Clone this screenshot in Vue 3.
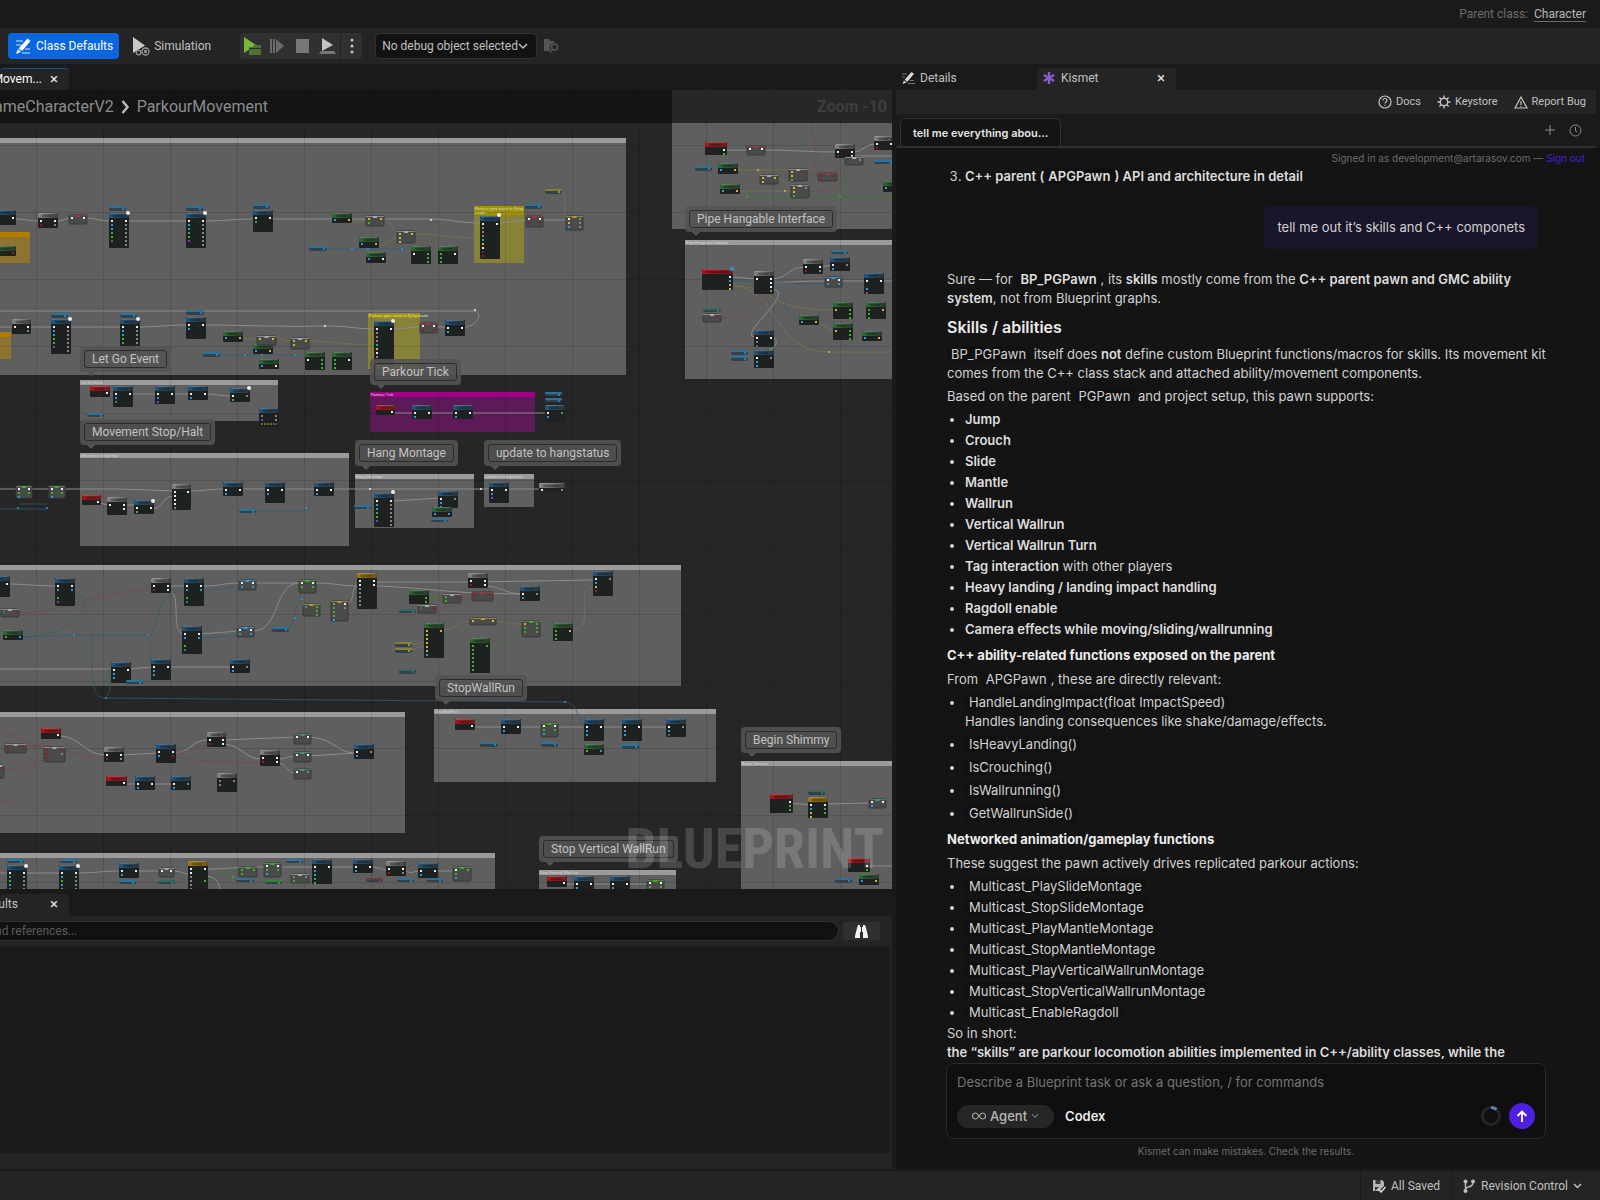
<script setup>
const LETTER = { w: '#ececec', b: '#2a9ad6', g: '#3fae2a', m: '#8f3aac', y: '#d8b23a', r: '#8e1c22', o: '#858585', t: '#2f7f74' }
const HEADS = { b: 'hBlue', g: 'hGreen', r: 'hRed', k: 'hGray', y: 'hGold' }
const VARS = { v: '#2b7fae', vg: '#3f8f3a', vy: '#a08d34', vr: '#8a3038', vt: '#33736c' }
const CHIPS = { c: '#a8a8a8', cr: '#9a3a44', cg: '#4fa33a', cb: '#3a98cc', cy: '#b09a45', ct: '#4f8f86' }

const parse = (text) => text.trim().split('\n').map((line) => line.trim().split(/\s+/))

/* kind x y width height [left pins] [right pins] */
const source = `
b -4 210 20 15 - w
k 38 213 20 15 wr wo
cr 69 215 18 9 w w
v 109 206 17 5
b 109 213 20 35 wbbggm wooooooo
v 186 206 17 5
b 186 213 20 35 wbbggm wooooooo
v 253 204 17 5
b 253 210 20 22 wb w
v 309 246 18 5
g -4 246 20 10 - r
k 12 319 19 15 w wo
v 51 313 17 5
b 51 319 20 35 wbbggm wooooooo
v 120 313 17 5
b 120 319 20 35 wbbggm wooooooo
v 186 310 18 5
b 186 317 20 22 wb w
g 223 331 20 11 b y
v 203 352 17 5
c 257 336 19 9 y y
g 253 344 20 10 b y
g 259 359 20 10 b w
c 291 338 18 11 yy y
g 305 352 20 18 w ggg
g 332 352 20 18 ggg w
g 332 213 20 10 b y
c 366 216 18 10 yg y
g 359 237 20 11 b y
g 366 252 20 11 b w
c 397 231 18 12 yyy y
g 411 246 20 18 w ggg
g 438 246 20 18 ggg w
b 480 216 20 43 wooobywrrg w
cr 526 216 17 11 wr wr
v 525 204 17 5
vy 545 189 17 5
cy 566 216 17 14 wyb ooo
b 374 321 20 44 wooobyworg w
cr 420 323 17 10 wr wr
b 445 320 20 16 wbm w
r 90 386 20 11 - w
b 113 386 20 21 wbt w
b 155 386 20 18 wbm w
b 188 386 20 14 wb w
b 230 388 20 14 wg o
b 259 408 20 19 om oo
v 87 413 17 4
r 376 405 19 10 - w
b 412 405 20 14 wb w
b 453 405 20 14 wb w
v 545 392 17 4
v 545 398 17 4
b 545 405 20 17 wb o
cg 16 486 16 12 wgb wg
cg 49 486 16 12 wgb wg
r 82 495 19 10 - w
k 107 497 20 18 w ww
b 134 500 20 14 wg w
k 172 484 19 26 wwwwo w
b 223 482 20 14 wb w
b 265 482 20 21 wb w
b 314 482 20 14 wb w
v 239 509 17 4
b 374 493 20 34 wbbggm wooooooo
b 438 491 20 17 wbb o
g 432 507 20 10 b b
v 431 518 17 4
v 354 505 17 4
b 489 482 20 21 wbm w
k 539 483 26 9 w o
b -4 576 14 21 - w
b 55 578 20 28 wb-gmb wb
c 1 609 18 8 t r
g 3 630 20 10 g b
k 151 578 20 15 wr ww
b 184 578 20 28 wb-gtb wb
cb 239 580 17 10 wb wb
cg 299 580 17 13 wg-b wg
y 357 573 20 36 wwooooo ww
cy 303 604 17 12 b ggg
cy 331 601 17 20 oggob wo
b 182 626 20 28 wb-gtb wb
cb 237 627 17 10 wb wb
v 272 627 17 5
b 111 662 20 21 wbb w
v 126 680 17 4
b 151 659 20 21 wbb w
b 230 659 20 14 wb o
k 468 573 20 15 wr ww
b 520 586 20 15 wb o
b 593 571 20 25 wbyr o
g 409 590 20 14 - gg
c 443 594 18 9 gg r
cr 472 592 21 9 rr r
vt 399 609 17 4
c 418 605 18 8 t r
g 424 623 20 35 yyyyyyb y
cy 470 618 26 7 yy y
cg 522 621 18 16 ygg ggg
g 553 623 20 18 ggg y
g 470 638 20 35 gggggggb g
vy 395 642 17 5
vy 395 648 17 5
vt 399 669 17 5
r 41 728 20 11 - w
c 5 744 21 9 rr r
c 44 747 21 15 rrr ro
c -4 765 8 13 - r
k 104 747 20 15 wr wo
b 156 744 20 19 wb wr
r 106 776 21 10 - w
b 135 776 20 14 wb w
b 171 776 20 14 wb o
k 217 773 20 19 oo o
k 207 732 19 15 wr ww
k 260 750 20 16 wr ww
ct 294 734 17 10 w w
ct 294 752 17 10 w w
ct 294 769 17 10 w o
b 354 744 20 15 wb o
r 455 719 20 11 - w
b 501 719 20 15 wb w
cg 541 723 17 14 wgb wg
b 584 719 20 22 wbb w
b 622 719 20 22 wbb w
b 666 719 20 18 wbm o
v 480 742 18 5
v 541 742 17 5
g 584 744 20 11 g b
v 622 744 17 5
v 7 859 17 4
b 7 865 20 30 wbgbgm wooooo
v 60 859 17 4
b 59 865 20 30 wbgbgm wooooo
b 119 863 20 15 wb w
v 119 880 17 4
c 159 868 15 9 w w
vt 158 880 17 4
y 188 861 20 32 wwooooo w--g
cg 239 867 18 10 gg g
v 236 878 18 4
cg 264 863 17 14 wgb wg
vg 265 880 17 4
v 286 859 17 4
c 291 874 18 9 gg o
b 312 859 20 25 wbbggb w
b 353 859 20 14 wb w
k 386 861 20 15 wr wo
vr 366 878 17 4
v 397 878 17 4
b 418 863 20 15 wb w
v 426 878 17 4
cg 453 867 18 14 wgb o
r 547 876 20 11 - w
b 574 876 20 16 wb w
b 610 876 20 16 wb w
cg 647 880 17 12 wg wg
r 770 794 23 19 - wgg
vt 808 790 17 5
y 808 797 20 21 wbyy wgg
ct 869 799 17 9 wb w
r 848 858 22 14 - wg
v 835 878 17 5
g 859 874 20 11 b y
r 705 142 22 13 - wg
cr 747 146 18 9 w w
k 835 144 20 14 wr ww
k 874 136 20 14 wr w
c 845 157 18 8 r o
v 874 160 20 4
v 695 166 17 5
g 718 163 20 11 b y
g 720 184 20 10 b y
c 760 175 18 9 yy y
c 789 169 18 12 yyg r
c 791 185 18 13 yyg o
cr 818 173 19 8 rr r
g 883 181 20 11 b y
r 702 269 31 21 - wbyy
k 754 271 20 23 w wwwo
k 803 259 20 15 wr wo
v 831 250 17 4
b 830 257 20 14 wb o
cb 825 277 17 10 wb wb
b 864 273 20 21 w-bm w
vt 703 308 18 4
c 703 314 18 8 - r
g 833 302 20 17 y ggg
g 866 302 20 17 ggg y
g 799 315 20 10 b y
g 833 323 20 17 y ggg
g 862 331 20 10 b y
b 754 330 20 17 wbm w
b 754 350 20 18 wbb o
v 731 350 17 5
v 731 356 17 5`

const pinsOf = (letters, px, py, step) =>
  !letters || letters === '-'
    ? []
    : [...letters].map((c, i) => ({ x: px, y: py + i * step, fill: LETTER[c] })).filter((p) => p.fill)

const items = parse(source).map(([kind, ...rest]) => {
  const [x, y, w, h] = rest.slice(0, 4).map(Number)
  const top = kind in HEADS ? (h < 12 ? 7 : 8) : 3
  const pins = [...pinsOf(rest[4], x + 2, y + top - 1, 4), ...pinsOf(rest[5], x + w - 4, y + top - 1, 4)].filter(
    (p) => p.y < y + h - 1,
  )
  return { kind, x, y, w, h, pins }
})
const nodes = items.filter((n) => n.kind in HEADS)
const chips = items.filter((n) => n.kind in CHIPS)
const vars = items.filter((n) => n.kind in VARS)

const comments = [
  { x: -10, y: 138, w: 636, h: 237, tone: 'gray' },
  { x: -10, y: 232, w: 40, h: 31, tone: 'amber' },
  { x: -10, y: 332, w: 21, h: 27, tone: 'amber' },
  { x: 474, y: 206, w: 50, h: 57, tone: 'yellow', bar: 9, title: 'Parkour gets stuck in flying', more: 'mode' },
  { x: 368, y: 313, w: 52, h: 56, tone: 'yellow', title: 'Parkour gets stuck in flying mode' },
  { x: 80, y: 380, w: 198, h: 41, tone: 'gray', title: 'Let Go Event' },
  { x: 80, y: 453, w: 269, h: 93, tone: 'gray', title: 'Movement Stop/Halt' },
  { x: 370, y: 392, w: 165, h: 40, tone: 'magenta', title: 'Parkour Tick' },
  { x: 355, y: 474, w: 119, h: 54, tone: 'gray', title: 'Hang Montage' },
  { x: 484, y: 474, w: 50, h: 33, tone: 'gray', title: 'update to hangstatus' },
  { x: -10, y: 565, w: 691, h: 121, tone: 'gray' },
  { x: -10, y: 712, w: 415, h: 121, tone: 'gray' },
  { x: 434, y: 709, w: 282, h: 73, tone: 'gray', title: 'StopWallRun' },
  { x: -10, y: 853, w: 505, h: 60, tone: 'gray' },
  { x: 539, y: 870, w: 137, h: 40, tone: 'gray', title: 'Stop Vertical WallRun' },
  { x: 741, y: 761, w: 200, h: 160, tone: 'gray', title: 'Begin Shimmy' },
  { x: 672, y: 60, w: 260, h: 169, tone: 'gray' },
  { x: 685, y: 240, w: 240, h: 139, tone: 'gray', title: 'Pipe Hangable Interface' },
]
const TONES = {
  gray: ['#5f5f5f', '#9b9b9b'],
  amber: ['#8d7431', '#b37b00'],
  yellow: ['#87823a', '#a19300'],
  magenta: ['#5c1a58', '#a00086'],
}

const bubbles = [
  { x: 80, y: 346, text: 'Let Go Event' },
  { x: 80, y: 419, text: 'Movement Stop/Halt' },
  { x: 370, y: 359, text: 'Parkour Tick' },
  { x: 355, y: 440, text: 'Hang Montage' },
  { x: 484, y: 440, text: 'update to hangstatus' },
  { x: 435, y: 675, text: 'StopWallRun' },
  { x: 741, y: 727, text: 'Begin Shimmy' },
  { x: 539, y: 836, text: 'Stop Vertical WallRun' },
  { x: 685, y: 206, text: 'Pipe Hangable Interface' },
]

const wires = [
  ['w', 'M14 219C26 219 28 221 40 221M56 221C64 221 66 218 72 218M85 218C96 218 98 221 111 221M127 221H188M204 221C226 221 234 219 256 219M270 219H431C450 219 456 223 482 223M497 223C512 223 514 220 528 220M541 220H568'],
  ['w', 'M0 311H474C484 312 478 326 462 328M0 327H14M29 327H53M69 327H122M137 327C156 327 166 325 188 325M203 325C250 325 270 327 325 326C350 326 356 329 376 329M391 329C404 329 408 327 422 327M435 327H447'],
  ['w', 'M131 394H157M173 394H190M206 394C218 394 220 396 232 396M393 413H414M429 413H455M471 413H547'],
  ['w', 'M0 489H120L175 491M189 491C204 491 208 489 225 489M241 489H267M283 489H316M331 489H541M99 503L109 505M125 505H136M152 509C164 508 162 496 174 496M394 501L440 498'],
  ['w', 'M7 584C26 584 36 586 57 586M169 586H186M202 586C222 586 222 583 240 583M255 583H300M314 583C336 583 340 586 358 586M375 582H470L595 580M375 586C420 587 450 594 522 594M486 586C500 586 506 594 522 594'],
  ['w', 'M169 591C182 592 170 634 184 634M200 634L239 631M252 631C282 631 272 583 300 583M347 604C356 602 350 586 358 586M0 669H113M129 669L153 667M169 667H232'],
  ['w', 'M60 736C80 736 84 755 106 755M122 755L158 753M174 753C192 753 190 740 208 740M224 740L296 737M224 744C244 746 244 759 262 759M278 759C286 759 288 756 296 756M278 763C288 764 286 773 296 773M309 737C336 739 336 753 356 753M309 756L356 753M125 784H137M153 784H173'],
  ['w', 'M473 727H503M519 727H543M556 727H586M602 727H624M640 727H668M0 873H9M26 873H61M77 873C96 873 100 871 121 871M137 871H160M172 871C182 871 182 874 190 874M206 869C230 869 232 867 266 867M279 867H314M329 867H355M371 867C380 867 380 870 388 870M404 870C412 875 412 871 420 871M435 871H455M206 876C218 877 219 884 221 892M565 884H576M592 884H612M627 884H649'],
  ['w', 'M725 150H749M763 150C790 150 810 152 837 152M853 152C864 152 864 144 876 144M853 156H892M731 277L756 279M771 279C788 279 788 267 805 267M821 267L832 265M771 283C790 283 790 281 827 281H892M771 289C800 290 734 337 756 337M791 803L810 805M826 804L871 803M868 866H892M756 357C746 362 790 345 772 337'],
  ['b', 'M20 504H47M0 509H47M256 511H306C312 508 308 500 316 497M74 594C100 594 80 637 20 637M22 637L74 635H148C160 635 152 590 186 590M92 635V660C92 690 95 698 106 698L565 702C582 704 576 727 586 727M202 590C220 590 226 587 240 587M200 638L239 635M288 630C296 624 294 600 303 600M220 355H300M327 249H405M731 281C760 281 750 283 827 284M771 285C790 285 780 319 800 319M148 635C154 650 146 663 153 667M109 669C112 690 108 696 106 698'],
  ['y', 'M350 221H366M384 219C392 222 392 231 398 234M414 234C440 234 450 238 482 238M377 246C390 246 388 238 398 238M241 339H258M275 338C284 338 284 341 292 341M308 341C330 341 350 345 376 345M560 191C570 192 560 222 568 223M440 630C456 630 456 621 471 621M495 621L524 625M571 631C600 628 570 588 595 587M410 645L425 642M410 650L425 646M736 170H789M758 170L762 178M776 178C784 178 784 186 792 186M738 191H792M731 286C780 286 760 310 834 310M731 286C780 286 770 352 829 352H892M818 323L834 331'],
  ['r', 'M17 613C60 614 90 591 153 590M25 747C60 740 60 756 106 758M0 730L46 750M4 770C30 770 30 758 46 758M0 802C34 804 20 760 46 760M174 757C200 762 230 762 262 763M721 318C750 318 768 300 772 290M805 175H820M807 192C850 190 850 170 838 160M805 175C826 170 810 130 812 123M435 609C460 606 452 600 473 598M460 598L473 595M174 753C186 753 190 748 208 745'],
  ['g', 'M747 197H892M845 160V197M319 606H332M206 882C230 870 230 869 240 870M489 647C506 647 510 634 523 632M428 597H444'],
]
const STROKES = { w: '#8c8c8c', b: '#2f5d73', y: '#7d7648', r: '#744a4c', g: '#3c7a30' }

const dots = parse(`
w 128 213
w 205 213
w 70 319
w 138 319
w 499 215
w 393 321
w 249 388
w 153 501
w 393 492
w 26 866
w 78 866
b 732 269`)
const reroutes = [
  ['w', 431, 220], ['w', 325, 326], ['w', 475, 310], ['w', 370, 489], ['w', 481, 489],
  ['b', 352, 249], ['b', 368, 249], ['b', 402, 249], ['b', 245, 355], ['b', 262, 355], ['b', 295, 355],
  ['b', 18, 508], ['b', 47, 508], ['b', 306, 508], ['b', 74, 635], ['b', 148, 635], ['b', 106, 698],
  ['b', 565, 702], ['b', 302, 599], ['b', 295, 618], ['y', 758, 170], ['y', 785, 191], ['y', 829, 352],
  ['g', 747, 197], ['g', 840, 197], ['g', 233, 877],
]

const skills = [
  ['Jump'], ['Crouch'], ['Slide'], ['Mantle'], ['Wallrun'], ['Vertical Wallrun'], ['Vertical Wallrun Turn'],
  ['Tag interaction', ' with other players'], ['Heavy landing / landing impact handling'],
  ['Ragdoll enable'], ['Camera effects while moving/sliding/wallrunning'],
]
const calls = ['IsHeavyLanding()', 'IsCrouching()', 'IsWallrunning()', 'GetWallrunSide()']
const multicasts = [
  'Multicast_PlaySlideMontage', 'Multicast_StopSlideMontage', 'Multicast_PlayMantleMontage',
  'Multicast_StopMantleMontage', 'Multicast_PlayVerticalWallrunMontage',
  'Multicast_StopVerticalWallrunMontage', 'Multicast_EnableRagdoll',
]
</script>

<template>
  <div class="editor">
    <header class="titlebar">
      <span>Parent class:</span>
      <a href="#">Character</a>
    </header>

    <div class="toolbar">
      <button class="tool primary">
        <svg width="18" height="18" viewBox="0 0 18 18">
          <path d="M2 4h7M2 8h5M8 16h8M11 12h5" stroke="#8fbdf5" stroke-width="1.3" />
          <path d="M13.500 1.500l3 2.500-8.500 10-3.500-2.500zM3.800 12.200l3.300 2.500L2 17z" fill="#fff" />
        </svg>
        Class Defaults
      </button>
      <button class="tool">
        <svg width="18" height="20" viewBox="0 0 18 20">
          <path d="M1 1l12 8.500L1 17z" fill="#c8c8c8" />
          <g fill="#242424" stroke="#9a9a9a" stroke-width="1.300">
            <circle cx="13.500" cy="15.500" r="3.500" />
            <circle cx="13.500" cy="15.500" r="1" />
            <circle cx="6.500" cy="16.500" r="2.300" />
          </g>
        </svg>
        Simulation
      </button>
      <div class="play">
        <button aria-label="Play">
          <svg width="19" height="18" viewBox="0 0 19 18">
            <path d="M1 0l12 8-12 8z" fill="#76b83a" />
            <path d="M6 10h4l1-2h7v10H6z" fill="#4e7231" />
            <path d="M6 11.500h12" stroke="#2f2f2f" />
          </svg>
        </button>
        <button aria-label="Step">
          <svg width="15" height="16" viewBox="0 0 15 16"><path d="M1 1v14M4 1v14" stroke="#6a6a6a" stroke-width="2" /><path d="M6 1l8 7-8 7z" fill="#6a6a6a" /></svg>
        </button>
        <button aria-label="Stop"><svg width="13" height="14"><rect width="13" height="14" fill="#767676" /></svg></button>
        <button aria-label="Eject">
          <svg width="17" height="17" viewBox="0 0 17 17"><path d="M3 0l11 7-11 6z" fill="#c4c4c4" /><path d="M2 13h13l2 3H0z" fill="#777" /></svg>
        </button>
        <button class="more" aria-label="Play options">
          <svg width="4" height="16"><g fill="#c4c4c4"><circle cx="2" cy="2" r="1.500" /><circle cx="2" cy="8" r="1.500" /><circle cx="2" cy="14" r="1.500" /></g></svg>
        </button>
      </div>
      <button class="debug">
        No debug object selected
        <svg width="10" height="7" viewBox="0 0 10 7"><path d="M1 1l4 4 4-4" fill="none" stroke="#c0c0c0" stroke-width="1.500" /></svg>
      </button>
      <svg width="16" height="16" viewBox="0 0 16 16">
        <path d="M1 1h5l1 2h4v2a4.500 4.500 0 0 0-4 6v2H1z" fill="#565656" />
        <circle cx="11.500" cy="9" r="3" fill="none" stroke="#565656" stroke-width="1.500" />
        <path d="M9.500 11L7 14.500" stroke="#565656" stroke-width="1.500" />
      </svg>
    </div>

    <main class="body">
      <section class="left">
        <div class="tabs">
          <div class="tab cut active"><span>Movem...</span><button aria-label="Close tab">×</button></div>
        </div>

        <div class="graph">
          <svg class="canvas" width="100%" height="100%">
            <defs>
              <linearGradient id="hBlue"><stop offset="0" stop-color="#25567c" /><stop offset="1" stop-color="#24333c" /></linearGradient>
              <linearGradient id="hGreen"><stop offset="0" stop-color="#2f6a35" /><stop offset="1" stop-color="#28392a" /></linearGradient>
              <linearGradient id="hRed"><stop offset="0" stop-color="#a5161c" /><stop offset="1" stop-color="#6a1c20" /></linearGradient>
              <linearGradient id="hGray"><stop offset="0" stop-color="#858585" /><stop offset="1" stop-color="#3c3c3c" /></linearGradient>
              <linearGradient id="hGold"><stop offset="0" stop-color="#9a7a10" /><stop offset="1" stop-color="#6b5517" /></linearGradient>
              <pattern id="grid" width="67" height="67" patternUnits="userSpaceOnUse" x="36" y="11">
                <path d="M0.500 0V67M0 0.500H67" stroke="#000" stroke-opacity=".12" />
              </pattern>
            </defs>
            <g transform="translate(0 -90)">
              <g v-for="(c, i) in comments" :key="i">
                <rect :x="c.x" :y="c.y" :width="c.w" :height="c.h" :fill="TONES[c.tone][0]" />
                <rect :x="c.x" :y="c.y" :width="c.w" :height="c.bar || 5" :fill="TONES[c.tone][1]" />
                <text v-if="c.title" :x="c.x + 1" :y="c.y + 4" class="note">{{ c.title }}</text>
                <text v-if="c.more" :x="c.x + 1" :y="c.y + 8" class="note">{{ c.more }}</text>
              </g>
              <rect x="0" y="90" width="100%" height="100%" fill="url(#grid)" />
              <path v-for="(w, i) in wires" :key="i" :d="w[1]" fill="none" :stroke="STROKES[w[0]]" :stroke-opacity="w[0] === 'w' ? 1 : 0.75" />
              <g v-for="(n, i) in nodes" :key="i">
                <rect :x="n.x" :y="n.y" :width="n.w" :height="n.h" rx="1" fill="#1d2120" />
                <rect :x="n.x" :y="n.y" :width="n.w" height="5" rx="1" :fill="`url(#${HEADS[n.kind]})`" />
                <rect :x="n.x + 1" :y="n.y" :width="n.w - 2" height="1" fill="#fff" fill-opacity=".2" />
                <rect :x="n.x + 4" :y="n.y + 2" :width="n.w - 10" height="2" fill="#000" fill-opacity=".25" />
                <rect v-for="(p, j) in n.pins" :key="j" :x="p.x" :y="p.y" width="2" height="2" :fill="p.fill" />
              </g>
              <g v-for="(n, i) in chips" :key="i">
                <rect :x="n.x" :y="n.y" :width="n.w" :height="n.h" rx="1" fill="#484b48" stroke="#383838" />
                <rect :x="n.x" :y="n.y" :width="n.w" height="1" :fill="CHIPS[n.kind]" fill-opacity=".7" />
                <rect :x="n.x + n.w / 2 - 2" :y="n.y" width="4" height="2" :fill="CHIPS[n.kind]" />
                <rect v-for="(p, j) in n.pins" :key="j" :x="p.x" :y="p.y" width="2" height="2" :fill="p.fill" />
              </g>
              <g v-for="(n, i) in vars" :key="i">
                <rect :x="n.x" :y="n.y" :width="n.w" :height="n.h" rx="2" fill="#31424a" />
                <rect :x="n.x" :y="n.y" :width="n.w" height="2" rx="1" :fill="VARS[n.kind]" fill-opacity=".8" />
                <rect :x="n.x + n.w - 4" :y="n.y + 2" width="2" height="2" :fill="VARS[n.kind]" />
              </g>
              <circle v-for="(d, i) in dots" :key="i" :cx="d[1]" :cy="d[2]" r="2" :fill="LETTER[d[0]]" />
              <circle v-for="(d, i) in reroutes" :key="i" :cx="d[1]" :cy="d[2]" r="1" :fill="LETTER[d[0]]" />
              <path d="M261 424H277" stroke="#b9b52c" stroke-dasharray="2 1" />
            </g>
          </svg>

          <div v-for="b in bubbles" :key="b.text" class="bubble" :style="{ left: b.x + 'px', top: b.y - 90 + 'px' }">
            <span>{{ b.text }}</span>
          </div>

          <nav class="crumbs">
            <a href="#">ameCharacterV2</a>
            <svg width="9" height="14" viewBox="0 0 9 14"><path d="M1.500 1l5 6-5 6" fill="none" stroke="#bdbdbd" stroke-width="2.400" /></svg>
            <a href="#">ParkourMovement</a>
            <strong>Zoom -10</strong>
          </nav>
          <div class="watermark">BLUEPRINT</div>
        </div>

        <div class="tabs lower">
          <div class="tab cut"><span>ults</span><button aria-label="Close results">×</button></div>
        </div>
        <div class="find">
          <div class="find-row">
            <input type="text" aria-label="Find references" placeholder="nd references..." />
            <button aria-label="Find in Blueprints">
              <svg width="13" height="13" viewBox="0 0 13 13"><path d="M3 0h2v2h3V0h2l1 3 2 8v2H8V7H5v6H0v-2l2-8z" fill="#f2f2f2" /><path d="M6.500 2v5" stroke="#2f2f2f" /></svg>
            </button>
          </div>
          <div class="results"></div>
        </div>
      </section>

      <section class="right">
        <div class="tabs">
          <div class="tab details">
            <svg width="14" height="14" viewBox="0 0 14 14">
              <path d="M1 3h5M1 6h3M7 12.500h7M9 9.500h4" stroke="#777" />
              <path d="M10.500 1l2.500 1.800-6.500 8-2.800-2zM3 9.500l2.700 2L1.500 13z" fill="#dcdcdc" />
            </svg>
            <span>Details</span>
          </div>
          <div class="tab kismet">
            <svg width="14" height="14" viewBox="0 0 14 14"><path d="M7 1v12M1.800 4l10.400 6M1.800 10l10.400-6" stroke="#8a5ccc" stroke-width="2.400" /></svg>
            <span>Kismet</span>
            <button aria-label="Close Kismet">×</button>
          </div>
        </div>

        <div class="links">
          <a href="#">
            <svg width="14" height="14" viewBox="0 0 14 14" fill="none" stroke="#c4c4c4" stroke-width="1.200"><circle cx="7" cy="7" r="6" /><path d="M5 5.500c0-2.700 4-2.700 4 0 0 1.500-2 1.500-2 3M7 9.800v1" /></svg>
            Docs
          </a>
          <a href="#">
            <svg width="14" height="14" viewBox="0 0 14 14" fill="none" stroke="#c4c4c4"><circle cx="7" cy="7" r="3.700" stroke-width="1.400" /><path d="M7 .5v3M7 10.500v3M.5 7h3M10.500 7h3M2.400 2.400l2 2M9.600 9.600l2 2M2.400 11.600l2-2M9.600 4.400l2-2" stroke-width="1.400" /></svg>
            Keystore
          </a>
          <a href="#">
            <svg width="14" height="13" viewBox="0 0 14 13" fill="none" stroke="#c4c4c4" stroke-width="1.200"><path d="M7 1l6 11H1zM7 5v4M7 10v1" /></svg>
            Report Bug
          </a>
        </div>

        <div class="chats">
          <button class="chat-tab">tell me everything abou...</button>
          <button class="icon" aria-label="New chat"><svg width="10" height="10"><path d="M5 0v10M0 5h10" stroke="#8c8c8c" /></svg></button>
          <button class="icon" aria-label="History"><svg width="13" height="13" fill="none" stroke="#8c8c8c"><circle cx="6.500" cy="6.500" r="5.500" /><path d="M6.500 3v4l2 1" /></svg></button>
        </div>

        <p class="account">Signed in as development@artarasov.com — <a href="#">Sign out</a></p>

        <article class="talk">
          <ol start="3"><li><b>C++ parent (<code>APGPawn</code>) API and architecture in detail</b></li></ol>
          <div class="said">tell me out it’s skills and C++ componets</div>
          <p>Sure — for <code class="strong">BP_PGPawn</code>, its <b>skills</b> mostly come from the <b>C++ parent pawn and GMC ability system</b>, not from Blueprint graphs.</p>
          <h2>Skills / abilities</h2>
          <p><code>BP_PGPawn</code> itself does <b>not</b> define custom Blueprint functions/macros for skills. Its movement kit comes from the C++ class stack and attached ability/movement components.</p>
          <p>Based on the parent <code>PGPawn</code> and project setup, this pawn supports:</p>
          <ul>
            <li v-for="s in skills" :key="s[0]"><b>{{ s[0] }}</b>{{ s[1] }}</li>
          </ul>
          <h3>C++ ability-related functions exposed on the parent</h3>
          <p>From <code>APGPawn</code>, these are directly relevant:</p>
          <ul class="loose">
            <li><code>HandleLandingImpact(float ImpactSpeed)</code><br />Handles landing consequences like shake/damage/effects.</li>
            <li v-for="c in calls" :key="c"><code>{{ c }}</code></li>
          </ul>
          <h3>Networked animation/gameplay functions</h3>
          <p>These suggest the pawn actively drives replicated parkour actions:</p>
          <ul>
            <li v-for="m in multicasts" :key="m"><code>{{ m }}</code></li>
          </ul>
          <p>So in short:<br /><b>the “skills” are parkour locomotion abilities implemented in C++/ability classes, while the</b></p>
        </article>

        <form class="composer" @submit.prevent>
          <textarea rows="1" aria-label="Message" placeholder="Describe a Blueprint task or ask a question, / for commands"></textarea>
          <div class="controls">
            <button type="button" class="agent">
              <svg width="14" height="8" viewBox="0 0 14 8"><path d="M7 4C5.500 1.800 4.500 1 3.500 1a3 3 0 0 0 0 6C4.500 7 5.500 6.200 7 4s2.500-3 3.500-3a3 3 0 0 1 0 6C9.500 7 8.500 6.200 7 4z" fill="none" stroke="#a8a8a8" stroke-width="1.200" /></svg>
              Agent
              <svg width="8" height="6" viewBox="0 0 8 6"><path d="M1 1l3 3.500L7 1" fill="none" stroke="#999" /></svg>
            </button>
            <button type="button" class="model">Codex</button>
            <svg class="ring" width="22" height="22" viewBox="0 0 22 22" fill="none" stroke-width="3"><circle cx="11" cy="11" r="8.500" stroke="#262626" /><path d="M11 2.500a8.500 8.500 0 0 1 5.500 2" stroke="#5d7fa6" /></svg>
            <button class="send" aria-label="Send"><svg width="12" height="12" viewBox="0 0 12 12"><path d="M6 12V1.500M1.500 6L6 1.500 10.500 6" fill="none" stroke="#fff" stroke-width="1.800" /></svg></button>
          </div>
        </form>
        <p class="caveat">Kismet can make mistakes. Check the results.</p>
      </section>
    </main>

    <footer class="status">
      <button>
        <svg width="14" height="14" viewBox="0 0 14 14"><path d="M1 1h9l2 2v4l-5 5H1z" fill="#b5b5b5" /><path d="M3.500 1h5v4h-5zM3 12V8h4" fill="#3a3a3a" /><path d="M6.500 10l2.500 3 4.500-5" fill="none" stroke="#d5d5d5" stroke-width="1.600" /></svg>
        All Saved
      </button>
      <button>
        <svg width="13" height="14" viewBox="0 0 13 14"><g fill="#bdbdbd"><circle cx="2.500" cy="2.500" r="2" /><circle cx="2.500" cy="12" r="2" /><circle cx="10" cy="2.500" r="2" /></g><path d="M2.500 3v8M10 3c0 4-2 4-7 6" fill="none" stroke="#bdbdbd" stroke-width="1.400" /></svg>
        Revision Control
        <svg width="9" height="6" viewBox="0 0 9 6"><path d="M1 1l3.500 3.500L8 1" fill="none" stroke="#bdbdbd" stroke-width="1.500" /></svg>
      </button>
    </footer>
  </div>
</template>

<style>
body {
  margin: 0;
  background: #1a1a1a;
}
</style>

<style scoped>
* {
  box-sizing: border-box;
}
.editor {
  display: flex;
  flex-direction: column;
  height: 100vh;
  overflow: hidden;
  background: #1a1a1a;
  color: #c0c0c0;
  font: 12px/16px Roboto, sans-serif;
}
button {
  border: 0;
  padding: 0;
  background: none;
  color: inherit;
  font: inherit;
  white-space: nowrap;
}
a {
  color: inherit;
  text-decoration: none;
}
svg {
  flex: none;
}
p, h2, h3, ul, ol {
  margin: 0;
}
.titlebar {
  display: flex;
  flex: none;
  align-items: center;
  justify-content: flex-end;
  gap: 6px;
  height: 28px;
  padding-right: 14px;
  color: #6c6c6c;
}
.titlebar a {
  border-bottom: 1px solid #6c6c6c;
  color: #b8b8b8;
  line-height: 14px;
}
.toolbar {
  display: flex;
  flex: none;
  align-items: center;
  height: 36px;
  padding-left: 8px;
  background: #242424;
}
.tool {
  display: flex;
  align-items: center;
  gap: 4px;
  height: 26px;
  padding: 0 6px;
  border-radius: 4px;
}
.tool.primary {
  margin-right: 7px;
  background: #0a66e0;
  color: #fff;
}
.play {
  display: flex;
  align-items: center;
  height: 26px;
  margin-left: 23px;
  border-radius: 4px;
  background: #303030;
}
.play button {
  display: flex;
  align-items: center;
  justify-content: center;
  width: 25px;
  height: 26px;
}
.play .more {
  width: 22px;
  border-left: 1px solid #222;
}
.debug {
  display: flex;
  align-items: center;
  justify-content: space-between;
  width: 162px;
  height: 26px;
  margin: 0 6px 0 13px;
  padding: 0 8px 0 6px;
  border: 1px solid #303030;
  border-radius: 4px;
  background: #121212;
}
.body {
  display: flex;
  flex: 1;
  justify-content: space-between;
  min-height: 0;
}
.left {
  display: flex;
  flex: 1;
  flex-direction: column;
  min-width: 0;
  margin-right: 4px;
}
.right {
  display: flex;
  flex: 0 0 44%;
  flex-direction: column;
  min-width: 0;
  padding-right: 4px;
  background: linear-gradient(#1a1a1a 84px, #141414 84px);
}
.tabs {
  display: flex;
  flex: none;
  align-items: flex-end;
  height: 26px;
}
.tab {
  display: flex;
  align-items: center;
  height: 22px;
  padding-bottom: 2px;
  border-radius: 4px 4px 0 0;
}
.tab button {
  color: #e2e2e2;
  font-size: 15px;
}
.tab.cut {
  justify-content: flex-end;
  width: 69px;
  padding-right: 11px;
  overflow: hidden;
  background: #242424;
}
.tab.cut button {
  margin-left: 8px;
}
.tab.active {
  border-top: 1px solid #1c4f80;
  color: #fff;
}
.tabs.lower {
  height: 27px;
}
.lower .tab.cut button {
  margin-left: 32px;
}
.details {
  width: 141px;
  padding-left: 5px;
  gap: 5px;
}
.kismet {
  width: 139px;
  padding-right: 11px;
  padding-left: 5px;
  gap: 5px;
  background: #242424;
}
.kismet span {
  flex: 1;
}
.graph {
  position: relative;
  flex: 1;
  min-height: 0;
  overflow: hidden;
  background: #262626;
}
.canvas {
  display: block;
}
.note {
  fill: #d6d6d6;
  font-size: 4px;
}
.bubble {
  position: absolute;
  padding: 4px;
  border-radius: 4px;
  background: rgba(84, 84, 84, .88);
}
.bubble span {
  display: block;
  padding: 0 7px;
  border: 1px solid #2c2c2c;
  border-radius: 3px;
  color: #c2c2c2;
  white-space: nowrap;
}
.bubble::after {
  position: absolute;
  top: 100%;
  left: 7px;
  border: 4px solid transparent;
  border-top-color: #545454;
  content: "";
}
.crumbs {
  position: absolute;
  top: 0;
  left: 0;
  display: flex;
  align-items: center;
  width: 100%;
  height: 33px;
  padding-right: 5px;
  gap: 7px;
  background: rgba(10, 10, 10, .66);
  color: #8c8c8c;
  font-size: 16px;
}
.crumbs a:first-child {
  margin-left: -6px;
}
.crumbs strong {
  margin-left: auto;
  color: #3e3e3e;
}
.watermark {
  position: absolute;
  right: 8px;
  bottom: 12px;
  color: rgba(255, 255, 255, .16);
  font: bold 56px/56px "Roboto Condensed", "Liberation Sans Narrow", Roboto, sans-serif;
}
.find {
  display: flex;
  flex: none;
  flex-direction: column;
  height: 253px;
  background: #242424;
}
.find-row {
  display: flex;
  align-items: center;
  gap: 4px;
  height: 30px;
  padding-right: 12px;
}
.find input {
  flex: 1;
  min-width: 0;
  height: 20px;
  padding: 0;
  border: 1px solid #303030;
  border-left: 0;
  border-radius: 0 10px 10px 0;
  background: #111;
  color: #c0c0c0;
  font: inherit;
  text-indent: -5px;
}
.find input::placeholder {
  color: #5a5a5a;
}
.find-row button {
  display: grid;
  place-items: center;
  width: 37px;
  height: 18px;
  border-radius: 2px;
  background: #303030;
}
.results {
  flex: 1;
  margin: 0 2px 16px 0;
  background: #1c1c1c;
}
.links {
  display: flex;
  flex: none;
  align-items: center;
  justify-content: flex-end;
  gap: 16px;
  height: 24px;
  padding-right: 10px;
  background: #242424;
  font-size: 11px;
}
.links a {
  display: flex;
  align-items: center;
  gap: 4px;
}
.chats {
  display: flex;
  flex: none;
  align-items: flex-end;
  height: 34px;
  padding: 0 14px 0 4px;
  border-bottom: 2px solid #303030;
}
.chat-tab {
  height: 28px;
  margin-right: auto;
  padding: 0 12px;
  border: 1px solid #303030;
  border-bottom: 0;
  border-radius: 6px 6px 0 0;
  background: #141414;
  color: #e6e6e6;
  font: 600 11px/16px Inter, sans-serif;
}
.icon {
  display: flex;
  align-items: center;
  height: 32px;
  margin-left: 14px;
}
.account {
  flex: none;
  padding: 3px 11px 0 0;
  color: #6c6c6c;
  font: 10px/14px Inter, sans-serif;
  text-align: right;
}
.account a {
  color: #4a1fd0;
}
.talk {
  flex: 1;
  min-height: 0;
  padding: 2px 50px 0 51px;
  overflow: hidden;
  color: #d2d2d2;
  font: 13px/19px Inter, sans-serif;
}
.talk b, .talk .strong {
  color: #dedede;
  font-weight: 600;
}
.talk code {
  padding: 0 4px;
  border-radius: 3px;
  background: #111;
  font: inherit;
}
.talk p {
  margin-bottom: 4px;
}
.talk h2, .talk h3 {
  color: #ececec;
  font-weight: 700;
}
.talk h2 {
  margin: 9px 0 7px;
  font-size: 16px;
  line-height: 21px;
  font-weight: 600;
}
.talk h3 {
  margin: 7px 0 5px;
  font-size: 13px;
}
.talk ul, .talk ol {
  padding-left: 18px;
}
.talk li {
  margin-bottom: 2px;
}
.talk .loose li {
  margin-bottom: 4px;
}
.said {
  width: fit-content;
  margin: 20px 8px 21px auto;
  padding: 12px 13px;
  border-radius: 6px;
  background: #1a1629;
}
.composer {
  display: flex;
  flex: none;
  flex-direction: column;
  justify-content: space-between;
  height: 76px;
  margin: 4px 50px 0;
  padding: 9px 10px;
  border: 1px solid #2a2a2a;
  border-radius: 8px;
  background: #0f0f0f;
  font: 13px/19px Inter, sans-serif;
}
.composer textarea {
  height: 19px;
  padding: 0;
  border: 0;
  outline: 0;
  resize: none;
  background: none;
  color: #d2d2d2;
  font: inherit;
}
.composer textarea::placeholder {
  color: #757575;
}
.controls {
  display: flex;
  align-items: center;
}
.agent {
  display: flex;
  align-items: center;
  gap: 4px;
  height: 23px;
  padding: 0 15px;
  border-radius: 12px;
  background: #262626;
  color: #b8b8b8;
  font-weight: 500;
}
.model {
  margin: 0 auto 0 11px;
  color: #ececec;
  font-weight: 600;
}
.ring {
  margin-right: 7px;
}
.send {
  display: grid;
  place-items: center;
  width: 26px;
  height: 26px;
  border-radius: 50%;
  background: #4f1fe0;
}
.caveat {
  flex: none;
  padding: 4px 0 10px;
  color: #6c6c6c;
  font: 10px/16px Inter, sans-serif;
  text-align: center;
}
.status {
  display: flex;
  flex: none;
  justify-content: flex-end;
  height: 29px;
  margin-top: 2px;
  padding-right: 7px;
  background: #242424;
}
.status button {
  display: flex;
  align-items: center;
  gap: 5px;
  padding: 0 11px;
  border-left: 1px solid #1a1a1a;
}
</style>
